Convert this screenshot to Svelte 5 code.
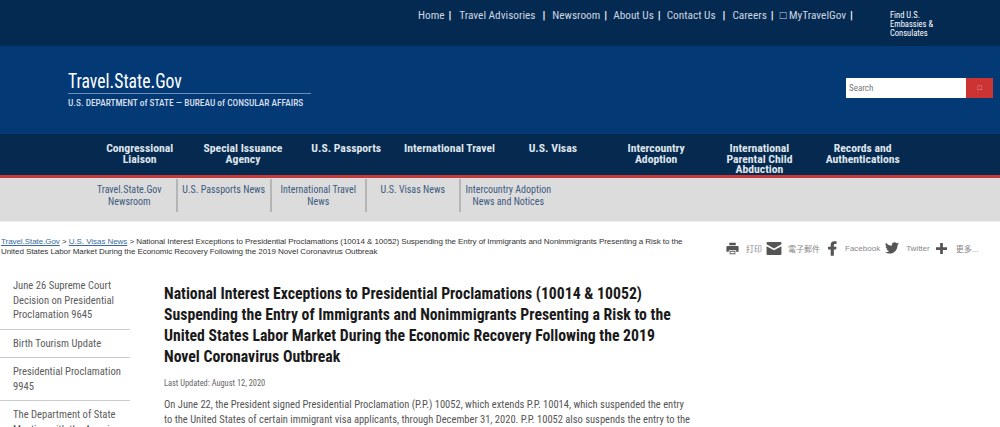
<script lang="ts">
  const topLinks = ['Home', 'Travel Advisories', 'Newsroom', 'About Us', 'Contact Us', 'Careers', '□\u00a0MyTravelGov'];
  const mainNav = [
    'Congressional Liaison',
    'Special Issuance Agency',
    'U.S. Passports',
    'International Travel',
    'U.S. Visas',
    'Intercountry Adoption',
    'International Parental Child Abduction',
    'Records and Authentications'
  ];
  const subNav = [
    'Travel.State.Gov Newsroom',
    'U.S. Passports News',
    'International Travel News',
    'U.S. Visas News',
    'Intercountry Adoption News and Notices'
  ];
  const sideLinks = [
    'June 26 Supreme Court Decision on Presidential Proclamation 9645',
    'Birth Tourism Update',
    'Presidential Proclamation 9945',
    'The Department of State Meeting with the American'
  ];
</script>

<div class="page">
  <div class="topbar">
    <ul class="top-links">
      {#each topLinks as link}
        <li>{link}</li>
      {/each}
    </ul>
    <div class="find">Find U.S. Embassies &amp; Consulates</div>
  </div>

  <header class="masthead">
    <div class="brand">
      <div class="brand-name"><span>Travel.State.Gov</span></div>
      <div class="brand-sub">U.S. DEPARTMENT of STATE — BUREAU of CONSULAR AFFAIRS</div>
    </div>
    <div class="search">
      <span class="search-input">Search</span>
      <span class="search-btn">□</span>
    </div>
  </header>

  <nav class="mainnav">
    {#each mainNav as item}
      <div class="mainnav-item">{item}</div>
    {/each}
  </nav>

  <nav class="subnav">
    {#each subNav as item}
      <div class="subnav-item">{item}</div>
    {/each}
  </nav>

  <div class="crumbrow">
    <p class="crumbs">
      <a href="#a">Travel.State.Gov </a> &gt; <a href="#b">U.S. Visas News</a> &gt; National Interest Exceptions to Presidential Proclamations (10014 &amp; 10052) Suspending the Entry of Immigrants and Nonimmigrants Presenting a Risk to the United States Labor Market During the Economic Recovery Following the 2019 Novel Coronavirus Outbreak
    </p>
    <div class="share">
      <svg width="13" height="13" viewBox="0 0 16 16" fill="#555"><path d="M4 1h8v3H4zM1.500 5h13a1 1 0 0 1 1 1v6h-3v-2h-9v2h-3V6a1 1 0 0 1 1-1zM4.500 11h7v4h-7z"/><path d="M5.500 12h5v2h-5z" fill="#fff"/></svg>
      <span class="label l1">打印</span>
      <svg width="16" height="13" viewBox="0 0 16 14" fill="#555"><path d="M1 0h14a1 1 0 0 1 1 1v1.500L8 7 0 2.500V1a1 1 0 0 1 1-1zM0 4.500 8 9l8-4.500V13a1 1 0 0 1-1 1H1a1 1 0 0 1-1-1z"/></svg>
      <span class="label l2">電子郵件</span>
      <svg width="9" height="15" viewBox="0 0 10 16" fill="#555"><path d="M3 16V9H0V6h3V4c0-2.600 1.500-4 3.800-4H9.500v3H8C6.800 3 6.500 3.600 6.500 4.500V6h3l-.5 3H6.500v7z"/></svg>
      <span class="label l3">Facebook</span>
      <svg width="14" height="12" viewBox="0 0 24 20" fill="#555"><path d="M24 2.400c-.9.400-1.800.7-2.800.8 1-.6 1.800-1.600 2.200-2.700-1 .6-2 1-3.100 1.200A4.900 4.900 0 0 0 11.900 6.200C7.800 6 4.200 4 1.700.9a4.900 4.900 0 0 0 1.500 6.600c-.8 0-1.600-.2-2.200-.6v.1c0 2.400 1.700 4.400 3.900 4.800-.7.200-1.500.2-2.200.1.600 2 2.400 3.400 4.600 3.400A9.900 9.900 0 0 1 0 17.300 14 14 0 0 0 7.500 19.500c9.100 0 14-7.500 14-14v-.6c1-.7 1.800-1.600 2.500-2.500z"/></svg>
      <span class="label l4">Twitter</span>
      <svg width="11" height="11" viewBox="0 0 12 12" fill="#555"><path d="M4.500 0h3v4.500H12v3H7.500V12h-3V7.500H0v-3h4.500z"/></svg>
      <span class="label l5">更多...</span>
    </div>
  </div>

  <div class="content">
    <aside class="side">
      {#each sideLinks as link}
        <div class="side-link">{link}</div>
      {/each}
    </aside>
    <main class="article">
      <h1>National Interest Exceptions to Presidential Proclamations (10014 &amp; 10052) Suspending the Entry of Immigrants and Nonimmigrants Presenting a Risk to the United States Labor Market During the Economic Recovery Following the 2019 Novel Coronavirus Outbreak</h1>
      <p class="updated">Last Updated: August 12, 2020</p>
      <p class="body">On June 22, the President signed Presidential Proclamation (P.P.) 10052, which extends P.P. 10014, which suspended the entry to the United States of certain immigrant visa applicants, through December 31, 2020. P.P. 10052 also suspends the entry to the</p>
    </main>
  </div>
</div>

<style>
  :global(body) {
    margin: 0;
    background: #fff;
  }

  .page {
    width: 1000px;
    height: 427px;
    overflow: hidden;
    font-family: Roboto, "Liberation Sans", sans-serif;
    font-stretch: 75%;
  }

  .topbar {
    height: 46px;
    box-sizing: border-box;
    background: #052a52;
    display: flex;
    padding: 9px 0 0 418px;
  }

  .top-links {
    display: flex;
    list-style: none;
    margin: 0;
    padding: 0;
    width: 472px;
    font-size: 11.300px;
    line-height: 13px;
    color: #cdd6e0;
  }

  .top-links li {
    padding-right: 6px;
    white-space: nowrap;
  }

  .top-links li:first-child {
    padding-right: 8px;
  }

  .top-links li:nth-child(2),
  .top-links li:nth-child(5) {
    padding-right: 7px;
  }

  .top-links li::after {
    content: '|';
    margin-left: 4px;
    color: #fff;
    font-weight: 700;
  }

  .top-links li:nth-child(2)::after,
  .top-links li:nth-child(5)::after {
    margin-left: 7px;
  }

  .find {
    width: 60px;
    margin-top: 2px;
    font-size: 8.500px;
    line-height: 8.800px;
    color: #fff;
  }

  .masthead {
    height: 88px;
    background: #033a75;
    display: flex;
    justify-content: space-between;
    padding-left: 68px;
    padding-right: 7px;
    box-sizing: border-box;
  }

  .brand {
    padding-top: 24px;
    width: 243px;
  }

  .brand-name {
    font-size: 20.500px;
    line-height: 22px;
    color: #fff;
    padding-bottom: 1px;
    border-bottom: 1px solid #6b8fb8;
  }

  .brand-name span {
    display: inline-block;
    transform: scaleX(0.86);
    transform-origin: left;
  }

  .brand-sub {
    font-size: 9.400px;
    font-weight: 500;
    line-height: 14px;
    margin-top: 2px;
    color: #d5deea;
    white-space: nowrap;
  }

  .search {
    display: flex;
    margin-top: 32px;
    height: 20px;
  }

  .search-input {
    width: 117px;
    background: #fff;
    font-size: 9px;
    line-height: 20px;
    padding-left: 3px;
    color: #777;
  }

  .search-btn {
    width: 27px;
    background: #cc3333;
    color: #f3d0d0;
    font-size: 7px;
    line-height: 20px;
    text-align: center;
  }

  .mainnav {
    height: 41px;
    background: #05294f;
    border-bottom: 3px solid #c63a3a;
    display: grid;
    grid-template-columns: repeat(8, 103.300px);
    padding-left: 88px;
  }

  .mainnav-item {
    padding: 9px 4px 0;
    font-size: 11.700px;
    line-height: 10.500px;
    font-weight: 700;
    text-align: center;
    color: #dfe5ec;
  }

  .subnav {
    height: 43px;
    border-bottom: 1px solid #eee;
    background: #dcdcdc;
    display: grid;
    grid-template-columns: repeat(5, 94.500px);
    padding-left: 83px;
    align-items: start;
  }

  .subnav-item {
    height: 33px;
    margin-top: 1px;
    padding: 5px 2px 0;
    box-sizing: border-box;
    border-right: 2px solid #b5b5b5;
    font-size: 10px;
    line-height: 12px;
    text-align: center;
    color: #3d5a80;
  }

  .subnav-item:last-child {
    border-right: 0;
  }

  .crumbrow {
    display: flex;
    padding-top: 15px;
    height: 29px;
  }

  .crumbs {
    margin: 0;
    padding-left: 1px;
    width: 700px;
    font-family: "Liberation Sans", Arial, sans-serif;
    font-size: 8px;
    line-height: 9.500px;
    letter-spacing: -0.060px;
    color: #333;
  }

  .crumbs a {
    color: #3a6a9e;
    text-decoration: underline;
  }

  .share {
    display: flex;
    align-items: center;
    padding-left: 25px;
    height: 20px;
    margin-top: 1px;
  }

  .label {
    font-family: "Liberation Sans", "Noto Sans CJK SC", sans-serif;
    font-size: 8px;
    color: #888;
    white-space: nowrap;
  }

  .l1 { margin: 0 4px 0 7px; }
  .l2 { margin: 0 8px 0 6px; }
  .l3 { margin: 0 5px 0 8px; }
  .l4 { margin: 0 6px 0 7px; }
  .l5 { margin-left: 9px; }

  .content {
    display: flex;
    padding-top: 8px;
  }

  .side {
    width: 130px;
    flex-shrink: 0;
  }

  .side-link {
    padding: 7px 4px 6px 13px;
    border-bottom: 1px solid #ccc;
    font-size: 10.600px;
    line-height: 14.500px;
    color: #5c5c5c;
  }

  .side-link:first-child {
    padding-top: 5px;
  }

  .article {
    width: 529px;
    margin-left: 34px;
  }

  h1 {
    margin: 9px 0 0;
    font-size: 15.750px;
    line-height: 21px;
    font-weight: 700;
    color: #1a1a1a;
  }

  .updated {
    margin: 10px 0 0;
    font-size: 8.400px;
    line-height: 12px;
    color: #666;
  }

  .body {
    margin: 8px 0 0;
    font-size: 10.500px;
    line-height: 15px;
    color: #555;
  }
</style>
